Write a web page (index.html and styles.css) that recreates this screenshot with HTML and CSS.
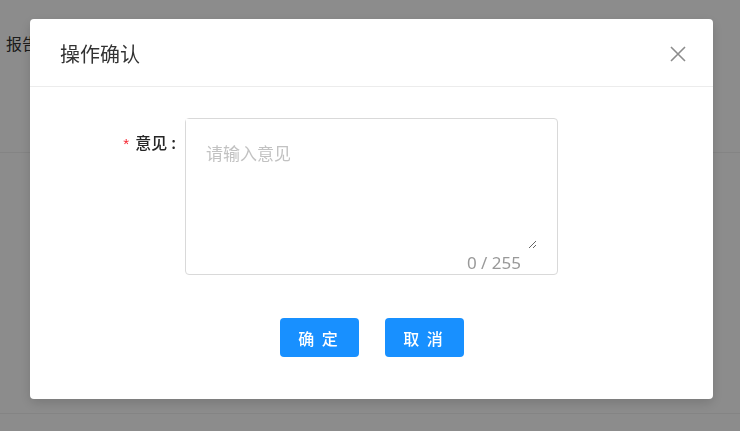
FILE: index.html
```html
<!DOCTYPE html>
<html lang="zh-CN">
<head>
    <meta charset="UTF-8">
    <meta name="viewport" content="width=device-width, initial-scale=1.0">
    <title>操作确认</title>
    <link rel="stylesheet" href="styles.css">
</head>
<body>
    <!-- page behind the dialog -->
    <div class="page">
        <div class="page-head"><span class="page-title">报告</span></div>
        <div class="page-row"></div>
    </div>

    <div class="mask">
        <div class="modal">
            <div class="modal-header">
                <span class="modal-title">操作确认</span>
                <button class="modal-close" aria-label="关闭">
                    <svg width="18" height="18" viewBox="0 0 18 18">
                        <path d="M2 2 L16 16 M16 2 L2 16" stroke="#8c8c8c" stroke-width="1.6" fill="none"/>
                    </svg>
                </button>
            </div>
            <div class="modal-body">
                <div class="form-item">
                    <label class="form-label"><span class="req">*</span>意见<span class="colon">:</span></label>
                    <div class="textarea-box">
                        <textarea placeholder="请输入意见"></textarea>
                        <span class="count">0 / 255</span>
                    </div>
                </div>
                <div class="actions">
                    <button class="btn">确 定</button>
                    <button class="btn">取 消</button>
                </div>
            </div>
        </div>
    </div>
</body>
</html>
```

FILE: styles.css
```css
body {
    margin: 0;
    font-family: "Noto Sans CJK SC", "Noto Sans", sans-serif;
    background-color: #fff;
    color: #333;
}

/* page behind the mask */
.page {
    height: 431px;
    overflow: hidden;
}
.page-head {
    padding: 31px 0 0 6px;
    height: 121px;
    border-bottom: 1px solid #f0f0f0;
}
.page-title {
    font-size: 16px;
    line-height: 24px;
    color: #333;
}
.page-row {
    height: 260px;
    border-bottom: 1px solid #f0f0f0;
}

/* mask + dialog */
.mask {
    position: fixed;
    top: 0;
    left: 0;
    right: 0;
    bottom: 0;
    background-color: rgba(0, 0, 0, 0.45);
}
.modal {
    margin: 19px 0 0 30px;
    width: 683px;
    height: 380px;
    background-color: #fff;
    border-radius: 4px;
    box-shadow: 0 4px 12px rgba(0, 0, 0, 0.15);
}
.modal-header {
    display: flex;
    align-items: center;
    justify-content: space-between;
    height: 68px;
    padding: 2px 26px 0 30px;
    border-bottom: 1px solid #ececec;
    box-sizing: border-box;
}
.modal-title {
    font-size: 20px;
    line-height: 28px;
    color: #333;
}
.modal-close {
    border: none;
    background: none;
    padding: 0;
    width: 18px;
    height: 18px;
    display: flex;
}

.modal-body {
    padding: 31px 0 0 0;
}
.form-item {
    display: flex;
    align-items: flex-start;
}
.form-label {
    width: 146px;
    text-align: right;
    padding-top: 12px;
    margin-right: 9px;
    font-size: 16px;
    line-height: 24px;
    color: #262626;
    font-weight: 500;
}
.req {
    color: #f5222d;
    font-size: 15px;
    margin-right: 6px;
    font-family: "Liberation Sans", sans-serif;
}
.colon {
    margin-left: 4px;
}
.textarea-box {
    position: relative;
    width: 373px;
    height: 157px;
    border: 1px solid #d9d9d9;
    border-radius: 4px;
    box-sizing: border-box;
}
.textarea-box textarea {
    display: block;
    width: 351px;
    height: 130px;
    border: none;
    outline: none;
    resize: both;
    padding: 21px 20px 0 20px;
    box-sizing: border-box;
    font-family: "Noto Sans CJK SC", "Noto Sans", sans-serif;
    font-size: 17px;
    line-height: 26px;
    color: #333;
}
.textarea-box textarea::placeholder {
    color: #c2c2c2;
}
.count {
    position: absolute;
    right: 36px;
    bottom: 0;
    font-size: 17px;
    line-height: 22px;
    color: #999;
    font-family: "Noto Sans", sans-serif;
}

.actions {
    display: flex;
    justify-content: center;
    gap: 26px;
    margin-top: 43px;
}
.btn {
    width: 79px;
    height: 39px;
    border: none;
    border-radius: 4px;
    background-color: #1890ff;
    color: #fff;
    font-family: "Noto Sans CJK SC", sans-serif;
    font-size: 16px;
    font-weight: 500;
    letter-spacing: 2px;
    padding: 0;
}
```
